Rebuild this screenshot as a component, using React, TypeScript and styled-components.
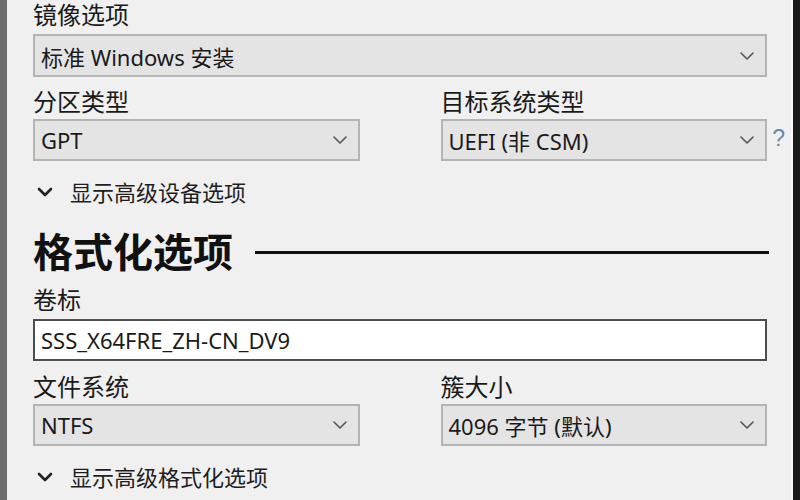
import * as React from "react";
import styled, { createGlobalStyle } from "styled-components";

const GlobalStyle = createGlobalStyle`
  html, body {
    margin: 0;
    padding: 0;
    background: #f0f0f0;
  }
  body {
    font-family: "Noto Sans", "Noto Sans CJK SC", sans-serif;
    color: #1a1a1a;
  }
`;

const Window = styled.div`
  display: flex;
  width: 800px;
  height: 500px;
  overflow: hidden;
  background: #f0f0f0;
`;

const LeftEdge = styled.div`
  width: 7px;
  background: #6d6d6d;
  flex-shrink: 0;
`;

const RightEdge = styled.div`
  width: 7px;
  background: #1c1c1c;
  border-left: 2px solid #fafafa;
  flex-shrink: 0;
`;

const Content = styled.div`
  flex: 1;
  padding: 1px 24px 0 26px;
  display: flex;
  flex-direction: column;
`;

const Label = styled.div<{ $top?: number }>`
  font-size: 24px;
  line-height: 30px;
  height: 30px;
  margin-top: ${props => props.$top || 0}px;
  color: #1a1a1a;
  white-space: nowrap;
`;

const TopLabel = styled(Label)`
  line-height: 28px;
  height: 29px;
`;

const Row = styled.div<{ $top?: number }>`
  display: grid;
  grid-template-columns: 1fr 1fr;
  column-gap: 81px;
  margin-top: ${props => props.$top || 0}px;
`;

const Field = styled.div`
  display: flex;
  flex-direction: column;
  position: relative;
`;

const SelectBox = styled.div<{ $top?: number; $height?: number }>`
  box-sizing: border-box;
  height: ${props => props.$height || 42}px;
  margin-top: ${props => props.$top || 2}px;
  background: #e4e4e4;
  border: 2px solid #b4b4b4;
  display: flex;
  align-items: center;
  justify-content: space-between;
  padding: 0 10px 0 6px;
  font-size: 22px;
  color: #1a1a1a;
  white-space: nowrap;
`;

const TextInput = styled.div`
  box-sizing: border-box;
  height: 42px;
  margin-top: 4px;
  background: #ffffff;
  border: 2px solid #4e4e4e;
  display: flex;
  align-items: center;
  padding: 0 6px;
  font-size: 22px;
  color: #1a1a1a;
`;

const Help = styled.span`
  position: absolute;
  right: -18px;
  bottom: 10px;
  font-size: 23px;
  line-height: 26px;
  color: #5d8db3;
  font-family: "Liberation Sans", sans-serif;
`;

const Toggle = styled.div<{ $top?: number }>`
  display: flex;
  align-items: center;
  gap: 17px;
  padding-left: 4px;
  margin-top: ${props => props.$top || 0}px;
  font-size: 22px;
  line-height: 30px;
  height: 30px;
  color: #1e1e1e;
`;

const Heading = styled.div`
  display: flex;
  align-items: center;
  margin-top: 20px;
  height: 46px;
`;

const HeadingText = styled.span`
  font-family: "Noto Sans CJK SC", sans-serif;
  font-weight: 700;
  font-size: 40px;
  line-height: 46px;
  color: #111;
  white-space: nowrap;
`;

const HeadingLine = styled.div`
  flex: 1;
  height: 3px;
  background: #111;
  margin: 4px -2px 0 22px;
`;

const Chevron = ({ dark }: { dark?: boolean }) => (
  <svg width="16" height="10" viewBox="0 0 16 10">
    <path
      d="M2 2 L8 8 L14 2"
      fill="none"
      stroke={dark ? "#222" : "#555"}
      strokeWidth={dark ? 2.6 : 1.6}
      strokeLinecap="round"
      strokeLinejoin="round"
    />
  </svg>
);

const Select = ({ value, top, height }: { value: string; top?: number; height?: number }) => (
  <SelectBox $top={top} $height={height}>
    <span>{value}</span>
    <Chevron />
  </SelectBox>
);

export default function App() {
  return (
    <>
      <GlobalStyle />
      <Window>
        <LeftEdge />
        <Content>
          <TopLabel>镜像选项</TopLabel>
          <Select value="标准 Windows 安装" top={4} height={43} />

          <Row $top={10}>
            <Field>
              <Label>分区类型</Label>
              <Select value="GPT" />
            </Field>
            <Field>
              <Label>目标系统类型</Label>
              <Select value="UEFI (非 CSM)" />
              <Help>?</Help>
            </Field>
          </Row>

          <Toggle $top={16}>
            <Chevron dark />
            <span>显示高级设备选项</span>
          </Toggle>

          <Heading>
            <HeadingText>格式化选项</HeadingText>
            <HeadingLine />
          </Heading>

          <Label $top={12}>卷标</Label>
          <TextInput>SSS_X64FRE_ZH-CN_DV9</TextInput>

          <Row $top={11}>
            <Field>
              <Label>文件系统</Label>
              <Select value="NTFS" />
            </Field>
            <Field>
              <Label>簇大小</Label>
              <Select value="4096 字节 (默认)" />
            </Field>
          </Row>

          <Toggle $top={16}>
            <Chevron dark />
            <span>显示高级格式化选项</span>
          </Toggle>
        </Content>
        <RightEdge />
      </Window>
    </>
  );
}
